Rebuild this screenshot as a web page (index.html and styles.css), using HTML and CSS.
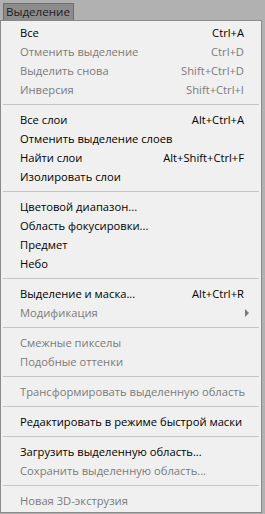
FILE: index.html
```html
<!DOCTYPE html>
<html lang="ru">
<head>
    <meta charset="UTF-8">
    <title>Выделение</title>
    <link rel="stylesheet" href="styles.css">
</head>
<body>
<div class="menubar">
    <span class="menu-title">Выделение</span>
</div>
<div class="menu">
    <div class="item"><span>Все</span><span class="key">Ctrl+A</span></div>
    <div class="item off"><span>Отменить выделение</span><span class="key">Ctrl+D</span></div>
    <div class="item off"><span>Выделить снова</span><span class="key">Shift+Ctrl+D</span></div>
    <div class="item off"><span>Инверсия</span><span class="key">Shift+Ctrl+I</span></div>
    <div class="sep"></div>
    <div class="item"><span>Все слои</span><span class="key">Alt+Ctrl+A</span></div>
    <div class="item"><span>Отменить выделение слоев</span></div>
    <div class="item"><span>Найти слои</span><span class="key">Alt+Shift+Ctrl+F</span></div>
    <div class="item"><span>Изолировать слои</span></div>
    <div class="sep"></div>
    <div class="item"><span>Цветовой диапазон...</span></div>
    <div class="item"><span>Область фокусировки...</span></div>
    <div class="item"><span>Предмет</span></div>
    <div class="item"><span>Небо</span></div>
    <div class="sep"></div>
    <div class="item"><span>Выделение и маска...</span><span class="key">Alt+Ctrl+R</span></div>
    <div class="item off"><span>Модификация</span><span class="arrow"></span></div>
    <div class="sep"></div>
    <div class="item off"><span>Смежные пикселы</span></div>
    <div class="item off"><span>Подобные оттенки</span></div>
    <div class="sep"></div>
    <div class="item off"><span>Трансформировать выделенную область</span></div>
    <div class="sep"></div>
    <div class="item"><span>Редактировать в режиме быстрой маски</span></div>
    <div class="sep"></div>
    <div class="item"><span>Загрузить выделенную область...</span></div>
    <div class="item off"><span>Сохранить выделенную область...</span></div>
    <div class="sep"></div>
    <div class="item off"><span>Новая 3D-экструзия</span></div>
</div>
</body>
</html>
```

FILE: styles.css
```css
body {
    margin: 0;
    background: #b1b1b1;
    font-family: "Open Sans", "Noto Sans", sans-serif;
    font-size: 11.2px;
    color: #000;
}
/* top bar with the open menu title */
.menubar {
    height: 20px;
    padding: 3px 0 0 3px;
    box-sizing: border-box;
}
.menu-title {
    display: inline-block;
    height: 17px;
    line-height: 16px;
    padding: 0 3px 0 2px;
    background: #8c8c8c;
    border: 1px solid #6e6e6e;
    border-bottom: none;
    box-sizing: border-box;
    color: #1e1e1e;
    font-size: 11.6px;
}
/* dropdown panel */
.menu {
    width: 262px;
    box-sizing: border-box;
    background: #f0f0f0;
    border: 1px solid #8a8a8a;
    padding: 2px;
}
.item {
    display: flex;
    justify-content: space-between;
    align-items: center;
    height: 19px;
    padding: 0 15px 0 17px;
    white-space: nowrap;
}
.item.off {
    color: #7b7b7b;
}
.arrow {
    width: 0;
    height: 0;
    border-top: 4px solid transparent;
    border-bottom: 4px solid transparent;
    border-left: 4px solid #7b7b7b;
    margin-right: -5px;
}
.sep {
    height: 11px;
    display: flex;
    align-items: center;
}
.sep::after {
    content: "";
    flex: 1;
    height: 1px;
    background: #c4c4c4;
}
```
